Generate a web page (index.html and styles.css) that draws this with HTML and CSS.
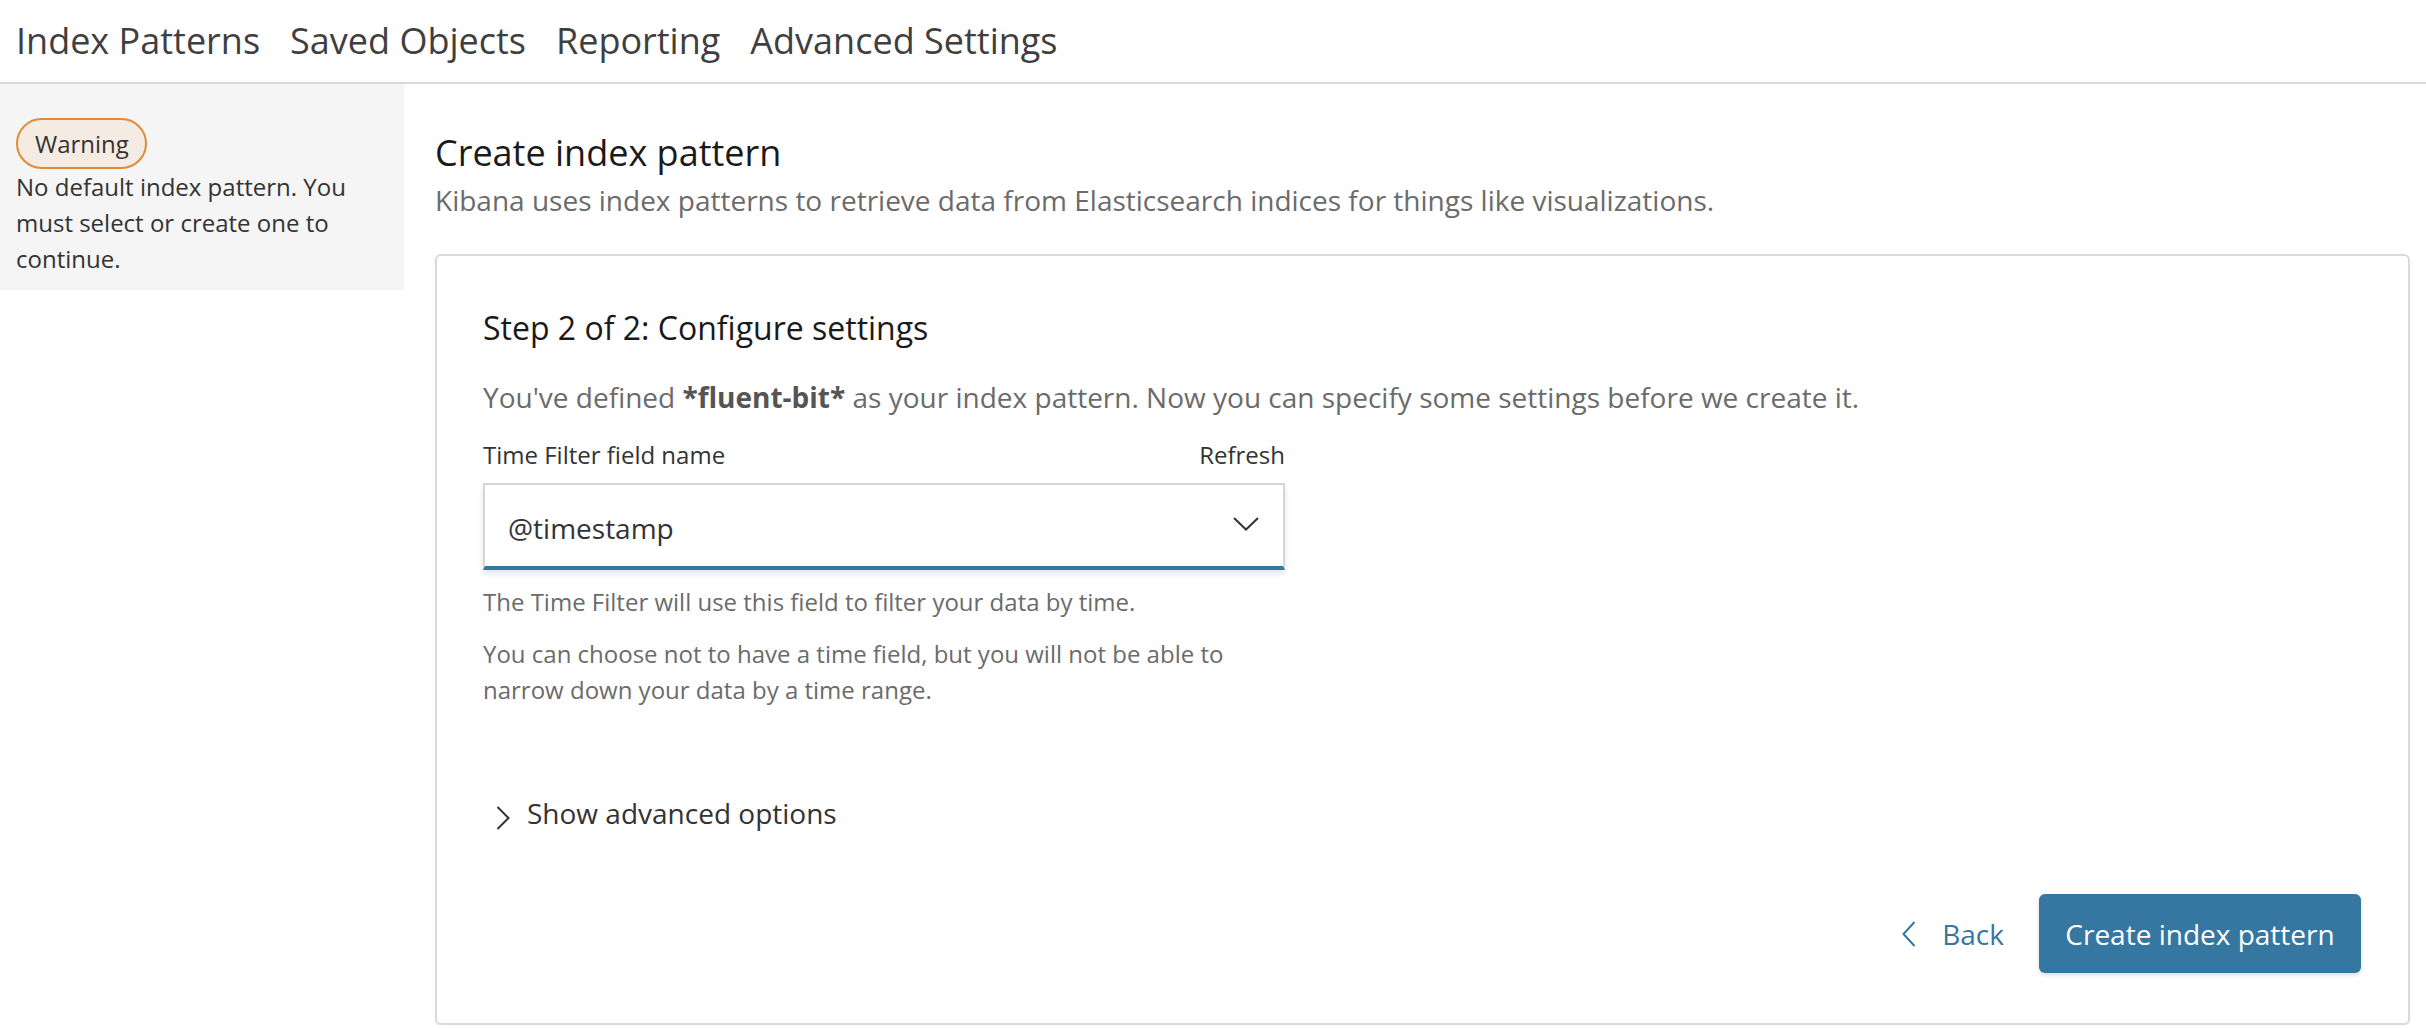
FILE: index.html
```html
<!DOCTYPE html>
<html>
<head>
<meta charset="utf-8">
<link rel="stylesheet" href="styles.css">
</head>
<body>
<header class="topnav">
  <a class="tab">Index Patterns</a>
  <a class="tab">Saved Objects</a>
  <a class="tab">Reporting</a>
  <a class="tab">Advanced Settings</a>
</header>
<div class="layout">
  <aside class="sidebar">
    <span class="badge">Warning</span>
    <p class="side-text">No default index pattern. You must select or create one to continue.</p>
  </aside>
  <main class="main">
    <h1 class="title">Create index pattern</h1>
    <p class="subtitle">Kibana uses index patterns to retrieve data from Elasticsearch indices for things like visualizations.</p>
    <section class="panel">
      <h2 class="step">Step 2 of 2: Configure settings</h2>
      <p class="desc">You've defined <strong>*fluent-bit*</strong> as your index pattern. Now you can specify some settings before we create it.</p>
      <div class="field">
        <div class="field-head">
          <span class="label">Time Filter field name</span>
          <span class="refresh">Refresh</span>
        </div>
        <div class="select">
          <span class="select-value">@timestamp</span>
          <svg class="chev-down" width="26" height="14" viewBox="0 0 26 14"><path d="M1 1 L13 12.5 L25 1" fill="none" stroke="#333" stroke-width="2"/></svg>
        </div>
        <p class="help">The Time Filter will use this field to filter your data by time.</p>
        <p class="help help2">You can choose not to have a time field, but you will not be able to narrow down your data by a time range.</p>
      </div>
      <div class="advanced">
        <svg class="chev-right" width="14" height="24" viewBox="0 0 14 24"><path d="M1.5 1 L12.5 12 L1.5 23" fill="none" stroke="#333" stroke-width="2"/></svg>
        <span>Show advanced options</span>
      </div>
      <div class="actions">
        <a class="back">
          <svg width="14" height="26" viewBox="0 0 14 26"><path d="M12.5 1 L1.5 13 L12.5 25" fill="none" stroke="#3677a1" stroke-width="2"/></svg>
          <span>Back</span>
        </a>
        <button class="primary">Create index pattern</button>
      </div>
    </section>
  </main>
</div>
</body>
</html>
```

FILE: styles.css
```css
html, body {
  margin: 0;
  padding: 0;
  background: #fff;
  font-family: "Open Sans", "Noto Sans", sans-serif;
  color: #333;
}
.topnav {
  display: flex;
  gap: 30px;
  height: 84px;
  box-sizing: border-box;
  padding: 16px 0 0 16px;
  border-bottom: 2px solid #d9d9d9;
}
.tab {
  font-size: 36px;
  line-height: 49px;
  color: #3f3f3f;
}
.layout {
  display: flex;
  align-items: flex-start;
}
.sidebar {
  width: 404px;
  flex: none;
  box-sizing: border-box;
  background: #f5f5f5;
  padding: 34px 16px 13px 16px;
  display: flex;
  flex-direction: column;
  align-items: flex-start;
}
.badge {
  display: block;
  box-sizing: border-box;
  height: 51px;
  line-height: 47px;
  padding: 0 16px 0 17px;
  border: 2px solid #e08b3a;
  border-radius: 26px;
  background: #f4ebe2;
  font-size: 24px;
  color: #333;
}
.side-text {
  margin: 0;
  font-size: 24px;
  line-height: 36px;
  color: #333;
}
.main {
  flex: 1;
  padding: 45px 16px 0 31px;
}
.title {
  margin: 0;
  font-size: 36px;
  font-weight: 400;
  line-height: 48px;
  color: #1a1a1a;
}
.subtitle {
  margin: 4px 0 0 0;
  font-size: 28px;
  line-height: 38px;
  color: #6b6b6b;
}
.panel {
  margin-top: 35px;
  border: 2px solid #d9d9d9;
  border-radius: 6px;
  padding: 50px 47px 50px 46px;
  box-shadow: 0 2px 2px rgba(0,0,0,0.06);
}
.step {
  margin: 0;
  font-size: 32px;
  font-weight: 400;
  line-height: 44px;
  color: #1a1a1a;
}
.desc {
  margin: 28px 0 0 0;
  font-size: 28px;
  line-height: 38px;
  color: #6b6b6b;
}
.desc strong {
  color: #555;
}
.field {
  width: 802px;
  margin-top: 22px;
}
.field-head {
  display: flex;
  justify-content: space-between;
  font-size: 24px;
  line-height: 33px;
  color: #333;
}
.select {
  margin-top: 12px;
  height: 87px;
  box-sizing: border-box;
  border: 2px solid #d6d6d6;
  border-bottom: 4px solid #3677a1;
  display: flex;
  align-items: center;
  justify-content: space-between;
  padding: 4px 24px 0 23px;
  box-shadow: 0 4px 6px rgba(0,0,0,0.1);
}
.select-value {
  font-size: 28px;
  line-height: 38px;
  color: #333;
}
.chev-down {
  margin-top: -7px;
}
.help {
  margin: 14px 0 0 0;
  font-size: 24px;
  line-height: 36px;
  color: #6b6b6b;
}
.help2 {
  margin-top: 16px;
}
.advanced {
  margin-top: 86px;
  display: flex;
  align-items: center;
  gap: 17px;
  padding-left: 13px;
  font-size: 28px;
  line-height: 38px;
  color: #333;
}
.chev-right {
  margin-top: 10px;
}
.actions {
  margin-top: 62px;
  display: flex;
  justify-content: flex-end;
  align-items: center;
  gap: 35px;
}
.back {
  display: flex;
  align-items: center;
  gap: 26px;
  font-size: 28px;
  color: #3677a1;
}
.primary {
  width: 322px;
  height: 79px;
  border: none;
  border-radius: 6px;
  background: #3677a1;
  color: #fff;
  font-family: "Open Sans", "Noto Sans", sans-serif;
  font-size: 28px;
  box-shadow: 0 2px 4px rgba(0,0,0,0.15);
}
```
